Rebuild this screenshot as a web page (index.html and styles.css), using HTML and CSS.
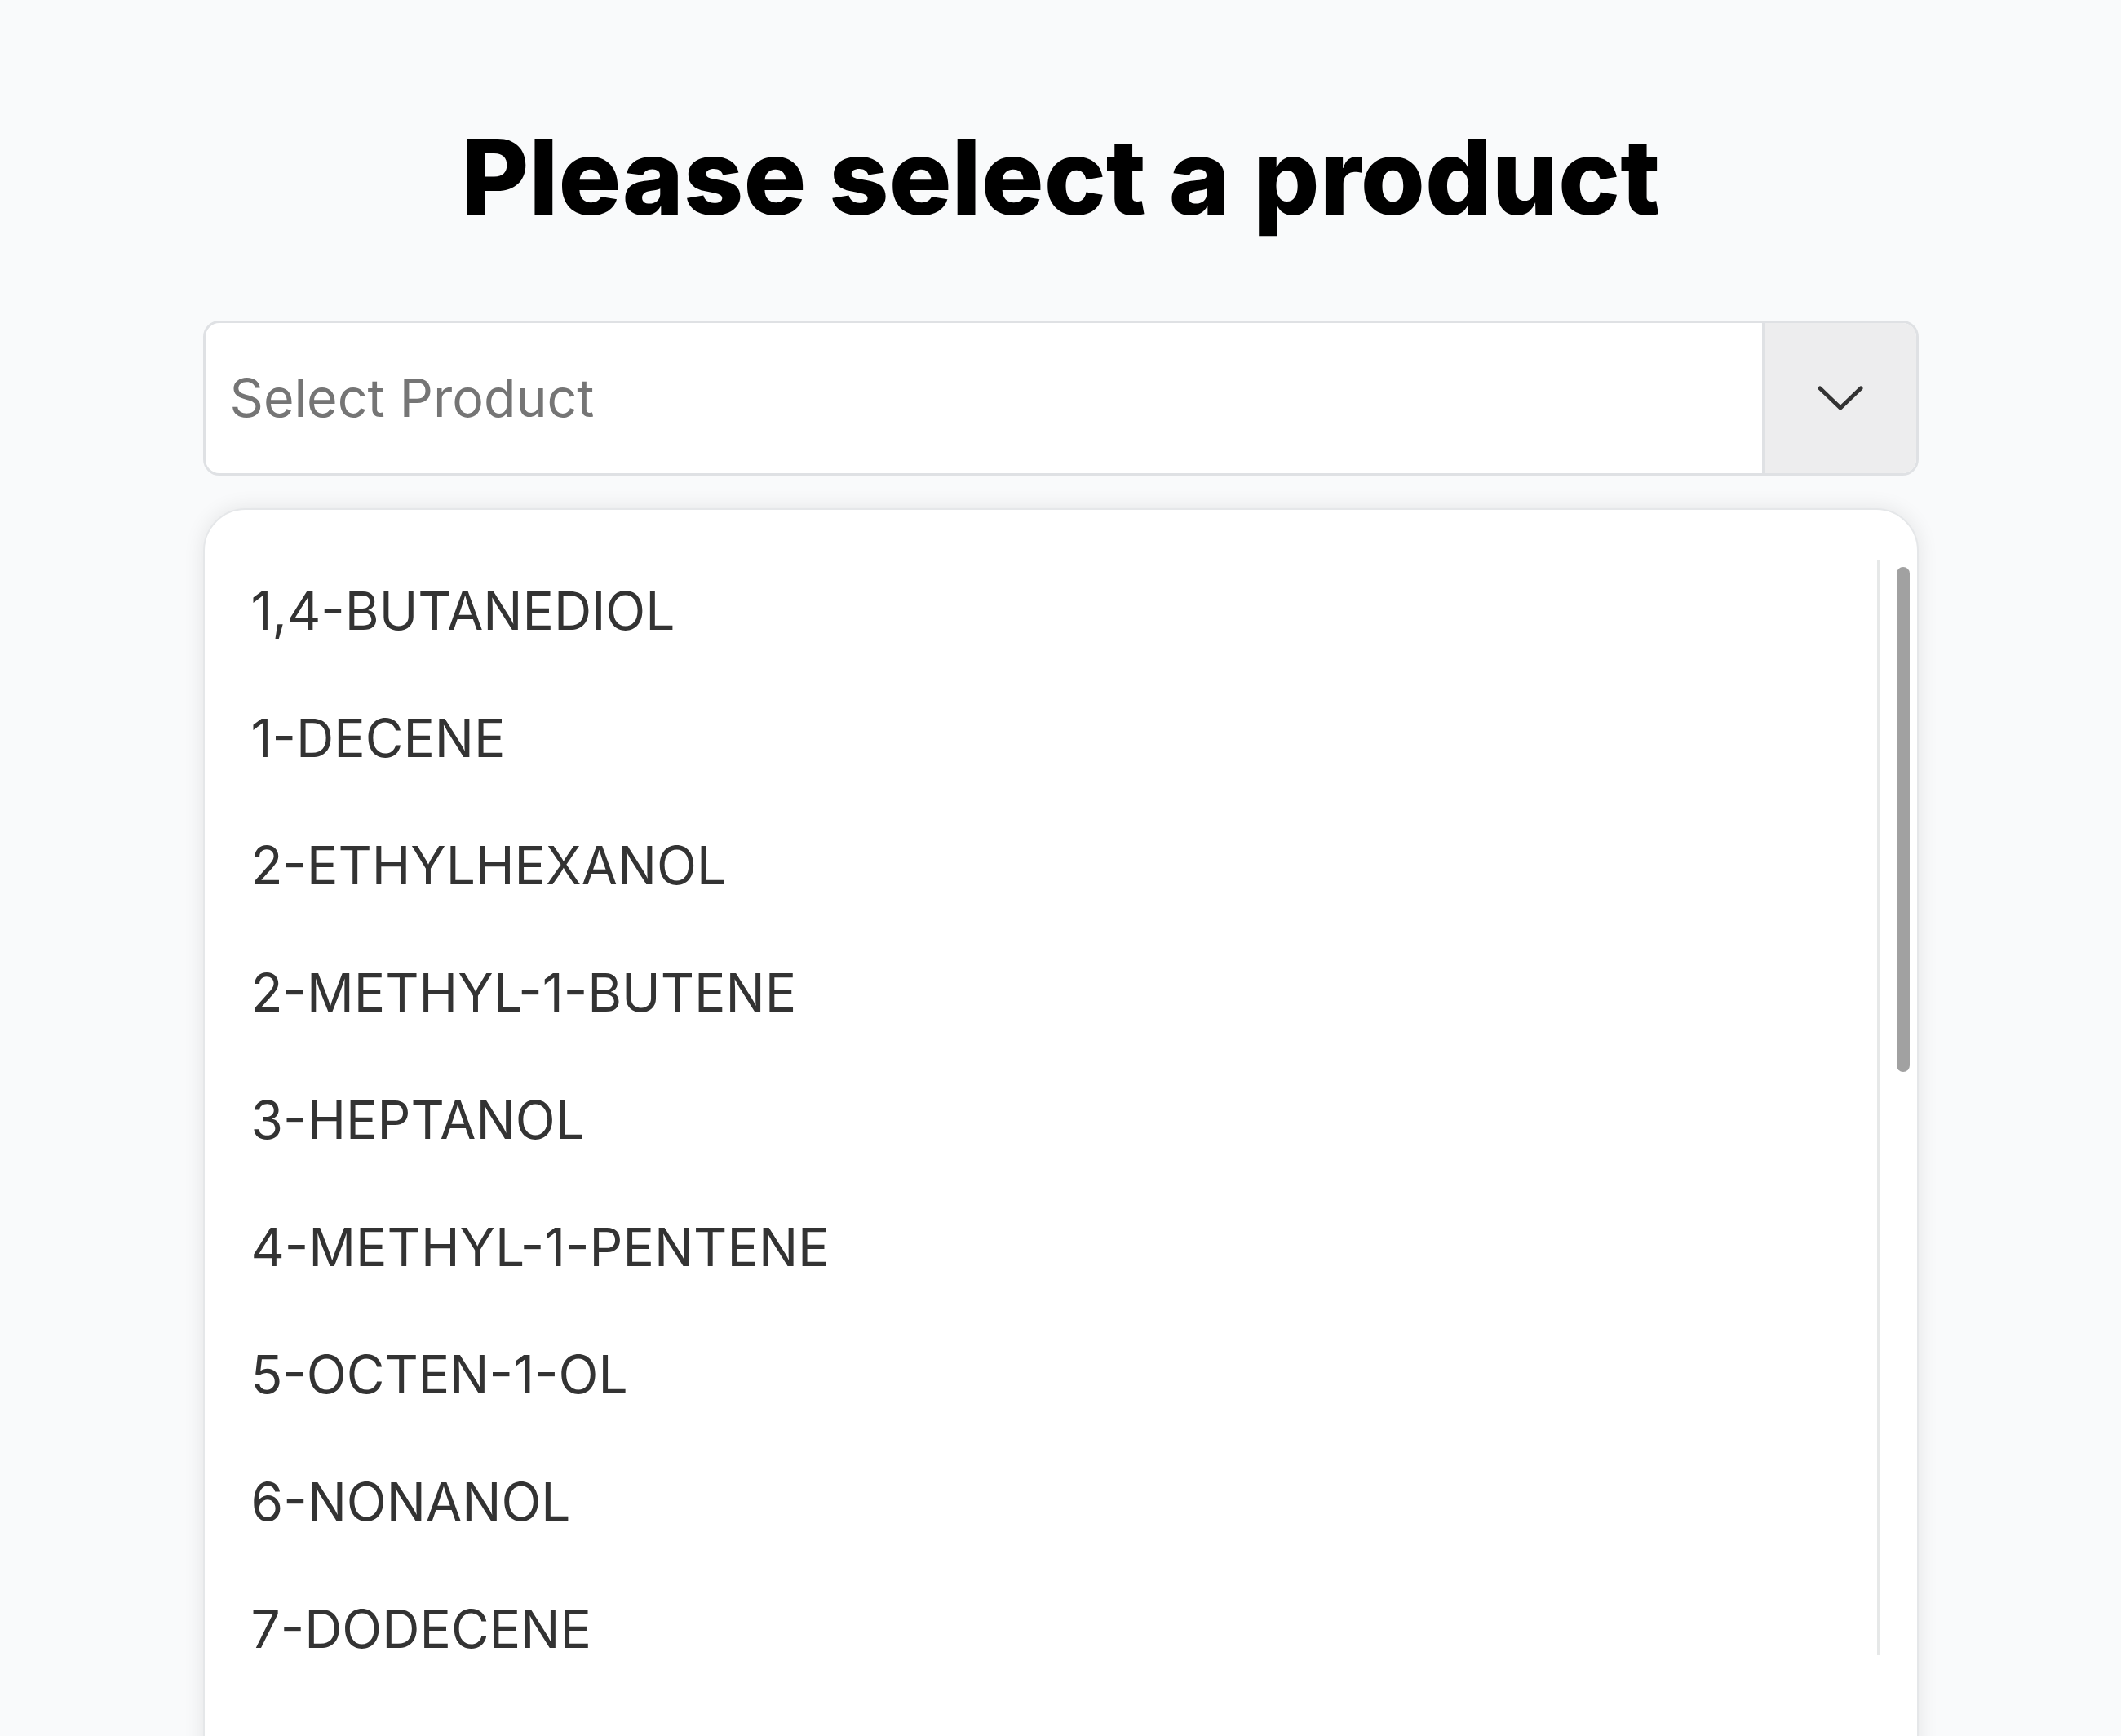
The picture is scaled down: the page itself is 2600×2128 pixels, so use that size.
FILE: index.html
```html
<!DOCTYPE html>
<html lang="en">
<head>
  <meta charset="UTF-8">
  <meta name="viewport" content="width=device-width, initial-scale=1">
  <title>Select a product</title>
  <link rel="stylesheet" href="styles.css">
</head>
<body>
  <div class="page">
    <h1 class="title">Please select a product</h1>

    <div class="select">
      <div class="select-value">Select Product</div>
      <div class="select-toggle">
        <svg width="56" height="30" viewBox="0 0 56 30">
          <path d="M3 3 L28 27 L53 3" fill="none" stroke="#333" stroke-width="5" stroke-linecap="round" stroke-linejoin="round"/>
        </svg>
      </div>
    </div>

    <div class="dropdown">
      <div class="list-wrap">
        <ul class="options">
          <li>1,4-BUTANEDIOL</li>
          <li>1-DECENE</li>
          <li>2-ETHYLHEXANOL</li>
          <li>2-METHYL-1-BUTENE</li>
          <li>3-HEPTANOL</li>
          <li>4-METHYL-1-PENTENE</li>
          <li>5-OCTEN-1-OL</li>
          <li>6-NONANOL</li>
          <li>7-DODECENE</li>
          <li>ACETONE</li>
          <li>ACRYLIC ACID</li>
          <li>BENZENE</li>
          <li>BUTYL ACETATE</li>
          <li>CYCLOHEXANE</li>
          <li>ETHYLENE GLYCOL</li>
          <li>ISOPROPANOL</li>
          <li>METHANOL</li>
          <li>TOLUENE</li>
        </ul>
        <div class="scrollbar">
          <div class="scrollbar-thumb"></div>
        </div>
      </div>
    </div>
  </div>
</body>
</html>
```

FILE: styles.css
```css
*{
  margin: 0;
  padding: 0;
  box-sizing: border-box;
}

html, body{
  height: 100%;
  overflow: hidden;
}

body{
  background: #f9fafb;
  font-family: Inter, "Noto Sans", sans-serif;
  color: #333;
}

.page{
  width: 2103px;
  margin: 0 auto;
  padding-top: 140px;
}

.title{
  font-size: 128px;
  line-height: 154px;
  font-weight: 800;
  color: #000;
  text-align: center;
}

.select{
  display: flex;
  height: 190px;
  margin-top: 99px;
  background: #fff;
  border: 3px solid #dfe1e4;
  border-radius: 20px;
  overflow: hidden;
}

.select-value{
  flex: 1;
  display: flex;
  align-items: center;
  padding-left: 30px;
  font-size: 64.5px;
  color: #757575;
}

.select-toggle{
  width: 189px;
  display: flex;
  align-items: center;
  justify-content: center;
  background: #ededee;
  border-left: 3px solid #dfe1e4;
}

.dropdown{
  margin-top: 40px;
  padding: 62px 13px 200px 57px;
  background: #fff;
  border: 2px solid #e5e7e9;
  border-radius: 52px;
  box-shadow: 0 0 26px rgba(0, 0, 0, 0.09);
}

.list-wrap{
  display: flex;
  height: 1342px;
}

.options{
  flex: 1;
  list-style: none;
  overflow: hidden;
}

.options li{
  padding: 23px 0 56px;
  font-size: 64px;
  line-height: 77px;
  color: #333;
}

.scrollbar{
  width: 36px;
  padding: 8px 0 0 20px;
  border-left: 4px solid #e6e8e8;
}

.scrollbar-thumb{
  width: 16px;
  height: 619px;
  background: #a1a1a1;
  border-radius: 8px;
}
```
